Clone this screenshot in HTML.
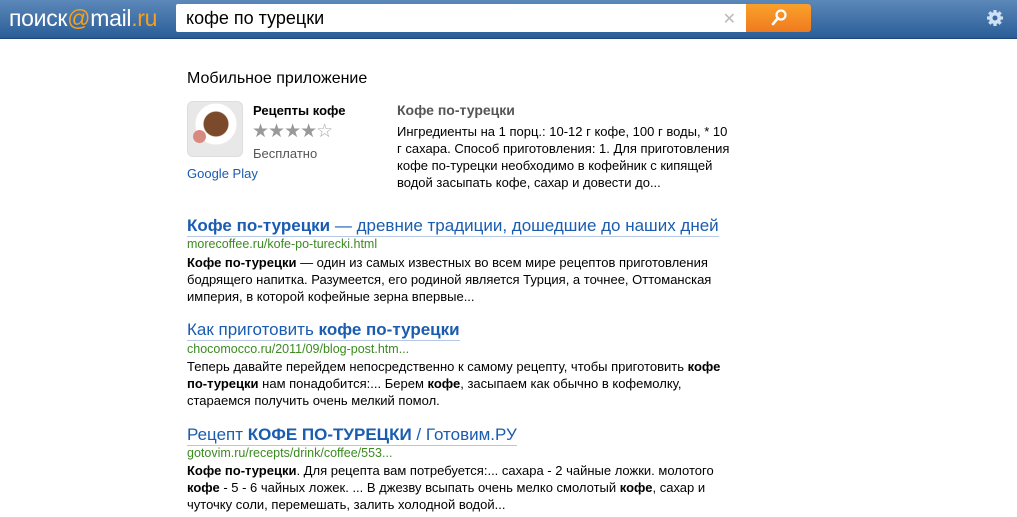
<!DOCTYPE html>
<html><head><meta charset="utf-8"><style>
body{margin:0;width:1017px;height:517px;overflow:hidden;background:#fff;font-family:"Liberation Sans",Arial,sans-serif;color:#000;position:relative}
.hdr{position:absolute;left:0;top:0;width:1017px;height:38px;background:linear-gradient(#5c88b9,#2a5d98);border-bottom:1px solid #1d4777}
.logo{position:absolute;left:9px;top:5px;font-size:23px;color:#fff;letter-spacing:-0.3px}
.logo b{color:#f6a11c;font-weight:normal}
.inp{position:absolute;left:176px;top:4px;width:570px;height:28px;background:#fff;border-radius:2px 0 0 2px}
.inp span{position:absolute;left:10px;top:4px;font-size:18px}
.inp i{position:absolute;right:10px;top:5px;color:#bbb;font-style:normal;font-size:16px}
.btn{position:absolute;left:746px;top:4px;width:65px;height:28px;background:linear-gradient(#f9a12b,#f07a1f);border-radius:0 3px 3px 0}
.a{position:absolute;font-size:13px;line-height:17px}
h3{position:absolute;left:187px;top:70px;margin:0;font-weight:normal;font-size:16px}
.t{position:absolute;left:187px;font-size:17px;color:#1a5cb0;border-bottom:1px solid #b8c8e4;line-height:20px}
.u{position:absolute;left:187px;font-size:12.5px;color:#3b8b20}
.s{position:absolute;left:187px;width:550px;font-size:13px;line-height:17px}
</style></head><body>
<div class="hdr">
<div class="logo">поиск<b>@</b>mail<b>.ru</b></div>
<div class="inp"><span>кофе по турецки</span><i>✕</i></div>
<div class="btn"><svg width="65" height="28"><circle cx="35" cy="11" r="4.5" fill="none" stroke="#fff" stroke-width="2.2"/><line x1="32" y1="14" x2="27" y2="20" stroke="#fff" stroke-width="2.6" stroke-linecap="round"/></svg></div>
<svg style="position:absolute;left:986px;top:9px" width="18" height="18" viewBox="0 0 18 18"><g fill="#cfe0f5"><circle cx="9" cy="9" r="6"/><g stroke="#cfe0f5" stroke-width="3.2"><line x1="9" y1="1" x2="9" y2="17"/><line x1="1" y1="9" x2="17" y2="9"/><line x1="3.3" y1="3.3" x2="14.7" y2="14.7"/><line x1="14.7" y1="3.3" x2="3.3" y2="14.7"/></g></g><circle cx="9" cy="9" r="2.5" fill="#3a6aa3"/></svg>
</div>
<h3>Мобильное приложение</h3>
<div style="position:absolute;left:187px;top:101px;width:54px;height:54px;border:1px solid #ddd;border-radius:6px;background:radial-gradient(circle at 28px 22px,#7a4a2a 0 12px,#fff 13px 20px,#e8e8e8 21px)"></div>
<div style="position:absolute;left:193px;top:130px;width:13px;height:13px;border-radius:50%;background:#d98a80"></div>
<div class="a" style="left:253px;top:102px;font-weight:bold">Рецепты кофе</div>
<div style="position:absolute;left:252px;top:120px;font-size:19px;color:#999;letter-spacing:-1px">★★★★<span style="color:#aaa">☆</span></div>
<div class="a" style="left:253px;top:145px;color:#555">Бесплатно</div>
<div class="a" style="left:187px;top:165px;color:#1a5cb0">Google Play</div>
<div class="a" style="left:397px;top:102px;font-weight:bold;color:#555;font-size:14px">Кофе по-турецки</div>
<div class="a" style="left:397px;top:123px;white-space:nowrap">Ингредиенты на 1 порц.: 10-12 г кофе, 100 г воды, * 10<br>г сахара. Способ приготовления: 1. Для приготовления<br>кофе по-турецки необходимо в кофейник с кипящей<br>водой засыпать кофе, сахар и довести до...</div>

<div class="t" style="top:216px"><b>Кофе по-турецки</b> — древние традиции, дошедшие до наших дней</div>
<div class="u" style="top:237px">morecoffee.ru/kofe-po-turecki.html</div>
<div class="s" style="top:254px"><b>Кофе по-турецки</b> — один из самых известных во всем мире рецептов приготовления бодрящего напитка. Разумеется, его родиной является Турция, а точнее, Оттоманская империя, в которой кофейные зерна впервые...</div>

<div class="t" style="top:320px">Как приготовить <b>кофе по-турецки</b></div>
<div class="u" style="top:342px">chocomocco.ru/2011/09/blog-post.htm...</div>
<div class="s" style="top:358px">Теперь давайте перейдем непосредственно к самому рецепту, чтобы приготовить <b>кофе по-турецки</b> нам понадобится:... Берем <b>кофе</b>, засыпаем как обычно в кофемолку, стараемся получить очень мелкий помол.</div>

<div class="t" style="top:425px">Рецепт <b>КОФЕ ПО-ТУРЕЦКИ</b> / Готовим.РУ</div>
<div class="u" style="top:446px">gotovim.ru/recepts/drink/coffee/553...</div>
<div class="s" style="top:462px"><b>Кофе по-турецки</b>. Для рецепта вам потребуется:... сахара - 2 чайные ложки. молотого <b>кофе</b> - 5 - 6 чайных ложек. ... В джезву всыпать очень мелко смолотый <b>кофе</b>, сахар и чуточку соли, перемешать, залить холодной водой...</div>
</body></html>
